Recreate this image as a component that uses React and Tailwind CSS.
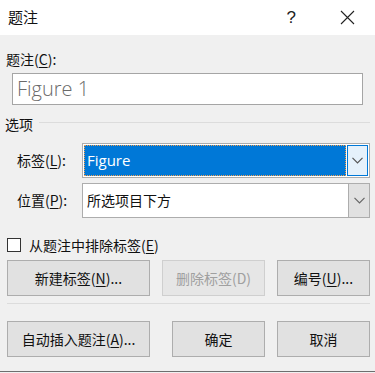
import React from "react";

const font = { fontFamily: '"Noto Sans CJK SC", "Noto Sans", sans-serif' };

function Btn({ children, w, disabled }) {
  return (
    <div
      className={`h-[36px] ${w} flex items-center justify-center border text-[14px] ${
        disabled ? "border-[#cfcfcf] bg-[#e6e6e6] text-[#a0a0a0]" : "border-[#adadad] bg-[#e1e1e1] text-[#111]"
      }`}
    >
      {children}
    </div>
  );
}

function Chevron({ color = "#555" }) {
  return (
    <svg width="11" height="7" viewBox="0 0 11 7">
      <path d="M0.5 0.8 L5.5 5.8 L10.5 0.8" fill="none" stroke={color} strokeWidth="1.2" />
    </svg>
  );
}

export default function App() {
  return (
    <div className="w-[375px] h-[373px] bg-[#f0f0f0] flex flex-col overflow-hidden text-[#111]" style={font}>
      <div className="h-[35px] bg-white flex items-center relative">
        <span className="ml-[8px] text-[15px]">题注</span>
        <span className="ml-auto mr-[44px] text-[17px] font-light text-[#222]" style={{ fontFamily: '"Liberation Sans", sans-serif' }}>?</span>
        <svg width="15" height="15" viewBox="0 0 15 15" className="mr-[20px]">
          <path d="M1 1 L14 14 M14 1 L1 14" stroke="#222" strokeWidth="1.1" />
        </svg>
      </div>

      <div className="flex flex-col pl-[6px] pr-[5px]">
        <div className="mt-[14px] h-[20px] flex items-center text-[14px] leading-none">
          题注(<span className="underline underline-offset-2">C</span>):
        </div>
        <div className="mt-[4px] ml-[6px] mr-[7px] h-[32px] border border-[#a5a5a5] bg-white flex items-center pl-[4px] text-[20px] font-light text-[#6a6a6a]" style={{ fontFamily: '"Open Sans", "Noto Sans", sans-serif' }}>
          Figure 1
        </div>

        <div className="mt-[9px] h-[20px] flex items-center text-[14px]">
          <span className="ml-[-1px]">选项</span>
          <div className="flex-1 ml-[6px] mr-[0px] h-px bg-[#dcdcdc] mt-[-3px]" />
        </div>

        <div className="mt-[9px] flex items-center">
          <span className="w-[76px] pl-[11px] text-[14px]">
            标签(<span className="underline underline-offset-2">L</span>):
          </span>
          <div className="w-[288px] h-[35px] border border-[#adadad] bg-white flex items-stretch p-[1px]">
            <div className="flex-1 bg-[#0078d7] border border-dotted border-[#f0a050] flex items-center pl-[2px] text-white text-[15px]" style={{ fontFamily: '"Open Sans", "Noto Sans", sans-serif' }}>
              Figure
            </div>
            <div className="w-[21px] ml-[1px] bg-[#e5f1fb] border border-[#0078d7] flex items-center justify-center">
              <Chevron />
            </div>
          </div>
        </div>

        <div className="mt-[5px] flex items-center">
          <span className="w-[76px] pl-[11px] text-[14px]">
            位置(<span className="underline underline-offset-2">P</span>):
          </span>
          <div className="w-[288px] h-[35px] border border-[#adadad] bg-white flex items-stretch">
            <div className="flex-1 flex items-center pl-[4px] text-[14px]">所选项目下方</div>
            <div className="w-[21px] bg-[#e1e1e1] border-l border-[#adadad] flex items-center justify-center">
              <Chevron color="#666" />
            </div>
          </div>
        </div>

        <div className="mt-[10px] flex items-center h-[34px]">
          <div className="ml-[1px] w-[14px] h-[14px] border border-[#333] bg-white" />
          <span className="ml-[8px] text-[14px]">
            从题注中排除标签(<span className="underline underline-offset-2">E</span>)
          </span>
        </div>

        <div className="mt-[-2px] flex items-center">
          <div className="ml-[1px]"><Btn w="w-[143px]">新建标签(<span className="underline underline-offset-2">N</span>)...</Btn></div>
          <div className="ml-[12px]"><Btn w="w-[103px]" disabled>删除标签(D)</Btn></div>
          <div className="ml-[12px]"><Btn w="w-[93px]">编号(<span className="underline underline-offset-2">U</span>)...</Btn></div>
        </div>

        <div className="mt-[7px] ml-[1px] mr-[0px] h-px bg-[#dcdcdc]" />

        <div className="mt-[17px] flex items-center">
          <div className="ml-[1px]"><Btn w="w-[143px]">自动插入题注(<span className="underline underline-offset-2">A</span>)...</Btn></div>
          <div className="ml-[22px]"><Btn w="w-[93px]">确定</Btn></div>
          <div className="ml-[12px]"><Btn w="w-[93px]">取消</Btn></div>
        </div>
      </div>
      <div className="mt-auto mb-[1px] h-[1px] w-full bg-[#6e6e6e]" />
    </div>
  );
}
